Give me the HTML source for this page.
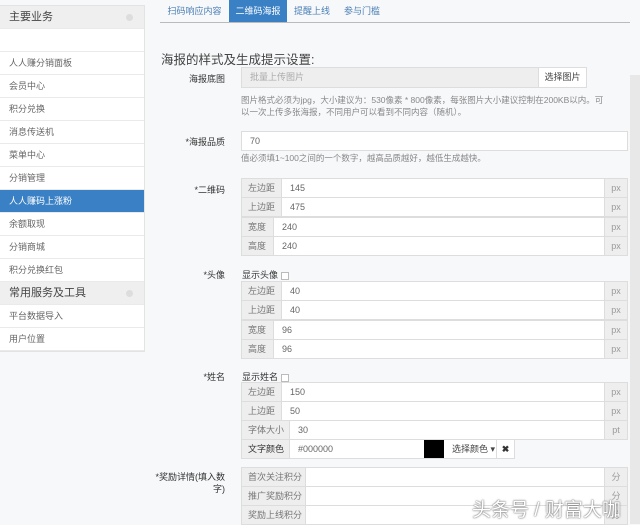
<!DOCTYPE html>
<html><head><meta charset="utf-8"><style>
*{box-sizing:border-box;margin:0;padding:0}
body{width:640px;height:524px;overflow:hidden;background:#f7f8fa;font-family:"Liberation Sans","Noto Sans CJK SC",sans-serif;color:#555;position:relative;font-size:9px}
.a{position:absolute}
.sb{left:0;top:5px;width:145px;background:#fff;border:1px solid #e3e3e3;border-left:none}
.sb div{height:23px;line-height:23px;padding-left:9px;border-bottom:1px solid #eaeaea;font-size:9px;color:#666}
.sb .h{background:#efefef;font-size:11px;color:#444;position:relative}
.sb .h:after{content:"";position:absolute;right:11px;top:8px;width:7px;height:7px;border-radius:50%;background:#ddd}
.sb .act{background:#3a80c4;color:#fff}
.tab{top:0;height:22px;line-height:22px;font-size:9px;color:#4a7fb5;text-align:center}
.lbl{font-size:9px;color:#333;text-align:right;width:70px;left:155px}
.row{left:241px;width:387px;height:20px;border:1px solid #ddd;background:#fff;display:flex}
.row .ad{background:#eee;color:#777;line-height:18px;padding-left:6px;border-right:1px solid #ddd;font-size:9px}
.row .v{flex:1;line-height:18px;padding-left:8px;color:#666}
.row .u{width:23px;background:#eee;border-left:1px solid #ddd;text-align:center;line-height:18px;color:#999}
.help{left:241px;font-size:8.5px;color:#888;line-height:12px}
.cb{display:inline-block;width:8px;height:8px;border:1px solid #bbb;background:#fff;vertical-align:middle;margin-left:3px}
</style></head><body>
<div class="a sb">
<div class="h">主要业务</div>
<div style="height:23px"></div>
<div>人人赚分销面板</div><div>会员中心</div><div>积分兑换</div><div>消息传送机</div><div>菜单中心</div><div>分销管理</div>
<div class="act">人人赚码上涨粉</div><div>余额取现</div><div>分销商城</div><div>积分兑换红包</div>
<div class="h">常用服务及工具</div><div>平台数据导入</div><div>用户位置</div>
</div>
<div class="a" style="left:160px;top:22px;width:470px;height:1px;background:#bbb"></div>
<div class="a tab" style="left:160px;width:69px">扫码响应内容</div>
<div class="a tab" style="left:229px;width:58px;background:#3a80c4;color:#fff">二维码海报</div>
<div class="a tab" style="left:287px;width:50px">提醒上线</div>
<div class="a tab" style="left:337px;width:50px">参与门槛</div>
<div class="a" style="left:630px;top:75px;width:10px;height:449px;background:#e8e8e8"></div>
<div class="a" style="left:161px;top:49px;font-size:12.5px;color:#444">海报的样式及生成提示设置:</div>
<div class="a lbl" style="top:72px">海报底图</div>
<div class="a" style="left:241px;top:67px;width:298px;height:21px;background:#eee;border:1px solid #ddd;line-height:19px;padding-left:8px;color:#aaa">批量上传图片</div>
<div class="a" style="left:538px;top:67px;width:49px;height:21px;background:#fff;border:1px solid #ddd;line-height:19px;text-align:center;color:#444">选择图片</div>
<div class="a help" style="top:94px">图片格式必须为jpg，大小建议为：530像素 * 800像素，每张图片大小建议控制在200KB以内。可<br>以一次上传多张海报，不同用户可以看到不同内容（随机）。</div>
<div class="a lbl" style="top:135px">*海报品质</div>
<div class="a row" style="top:131px"><div class="v">70</div></div>
<div class="a help" style="top:152px">值必须填1~100之间的一个数字，越高品质越好，越低生成越快。</div>
<div class="a lbl" style="top:183px">*二维码</div>
<div class="a row" style="top:178px"><div class="ad" style="width:40px">左边距</div><div class="v">145</div><div class="u">px</div></div>
<div class="a row" style="top:197px"><div class="ad" style="width:40px">上边距</div><div class="v">475</div><div class="u">px</div></div>
<div class="a row" style="top:217px"><div class="ad" style="width:32px">宽度</div><div class="v">240</div><div class="u">px</div></div>
<div class="a row" style="top:236px"><div class="ad" style="width:32px">高度</div><div class="v">240</div><div class="u">px</div></div>
<div class="a lbl" style="top:268px">*头像</div>
<div class="a" style="left:242px;top:268px;color:#333">显示头像<span class="cb"></span></div>
<div class="a row" style="top:281px"><div class="ad" style="width:40px">左边距</div><div class="v">40</div><div class="u">px</div></div>
<div class="a row" style="top:300px"><div class="ad" style="width:40px">上边距</div><div class="v">40</div><div class="u">px</div></div>
<div class="a row" style="top:320px"><div class="ad" style="width:32px">宽度</div><div class="v">96</div><div class="u">px</div></div>
<div class="a row" style="top:339px"><div class="ad" style="width:32px">高度</div><div class="v">96</div><div class="u">px</div></div>
<div class="a lbl" style="top:370px">*姓名</div>
<div class="a" style="left:242px;top:370px;color:#333">显示姓名<span class="cb"></span></div>
<div class="a row" style="top:382px"><div class="ad" style="width:40px">左边距</div><div class="v">150</div><div class="u">px</div></div>
<div class="a row" style="top:401px"><div class="ad" style="width:40px">上边距</div><div class="v">50</div><div class="u">px</div></div>
<div class="a row" style="top:420px"><div class="ad" style="width:48px">字体大小</div><div class="v">30</div><div class="u">pt</div></div>
<div class="a row" style="top:439px;width:274px"><div class="ad" style="width:48px;color:#333">文字颜色</div><div class="v">#000000</div><div style="width:20px;background:#000"></div><div style="width:53px;line-height:18px;padding-left:8px;color:#444;border-right:1px solid #ddd">选择颜色 ▾</div><div style="width:17px;text-align:center;line-height:18px;color:#333;font-weight:bold">✖</div></div>
<div class="a lbl" style="top:471px;line-height:12px">*奖励详情(填入数<br>字)</div>
<div class="a row" style="top:467px"><div class="ad" style="width:64px">首次关注积分</div><div class="v"></div><div class="u">分</div></div>
<div class="a row" style="top:486px"><div class="ad" style="width:64px">推广奖励积分</div><div class="v"></div><div class="u">分</div></div>
<div class="a row" style="top:505px"><div class="ad" style="width:64px">奖励上线积分</div><div class="v"></div><div class="u">分</div></div>
<div class="a" style="left:472px;top:495px;font-size:19px;color:#fff;text-shadow:0 0 2px #777,0 0 1px #555;white-space:nowrap">头条号 / 财富大咖</div>
</body></html>
